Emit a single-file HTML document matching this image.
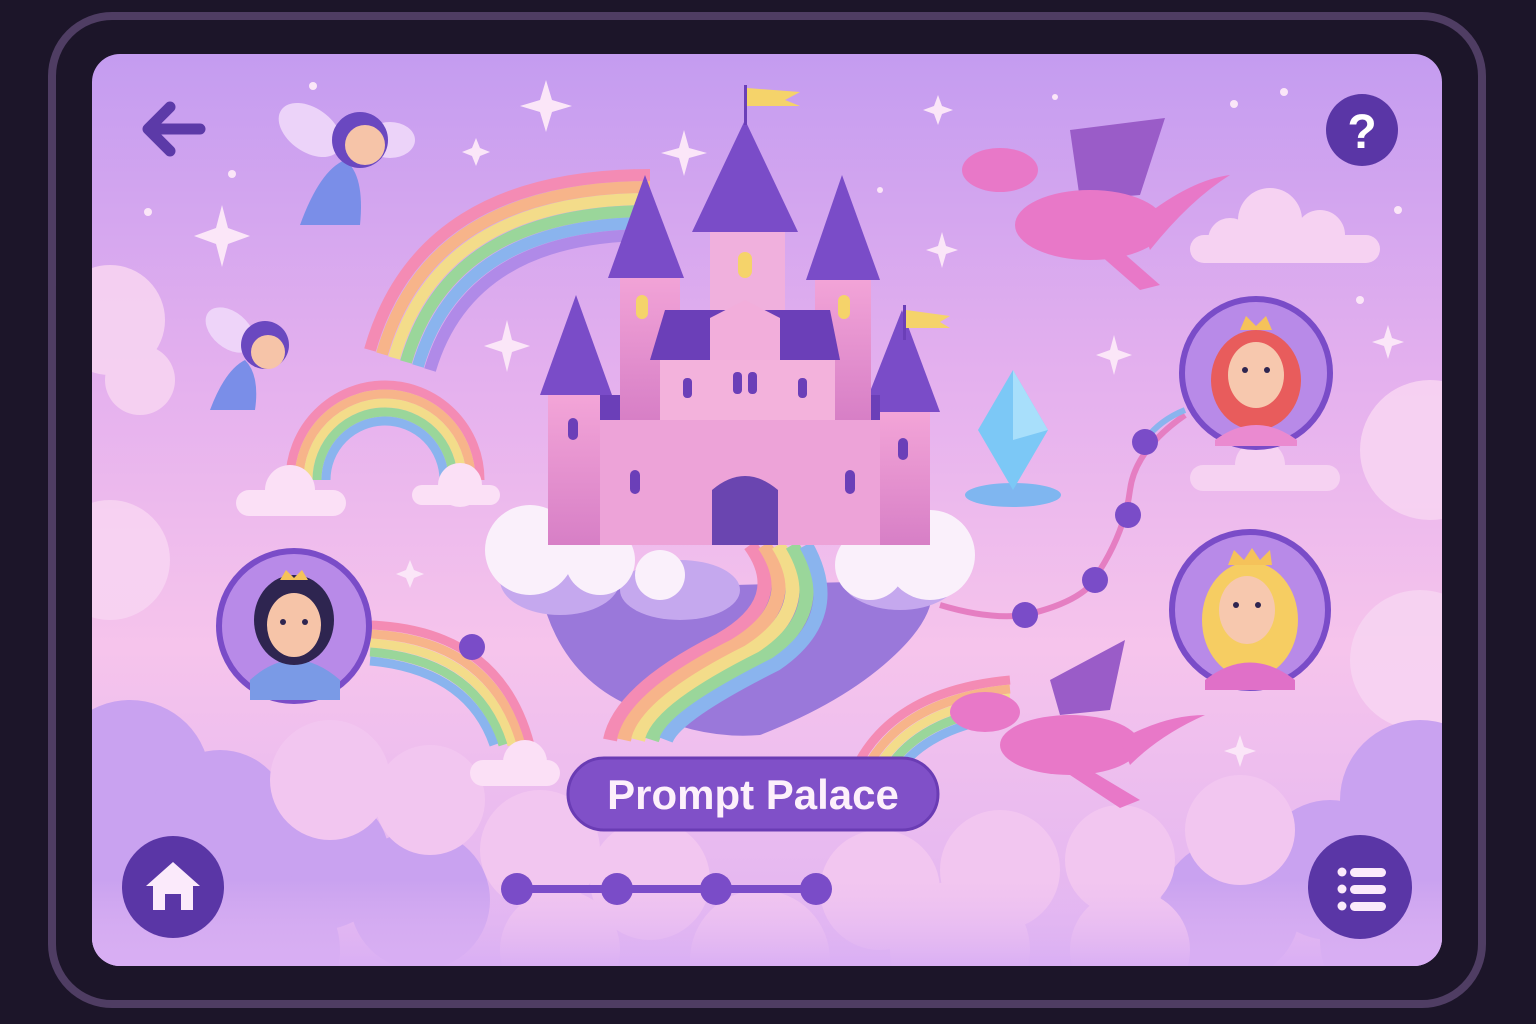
<!DOCTYPE html>
<html><head><meta charset="utf-8"><style>
html,body{margin:0;padding:0;background:#1c1529;width:1536px;height:1024px;overflow:hidden}
svg{display:block}
</style></head><body>
<svg width="1536" height="1024" viewBox="0 0 1536 1024" xmlns="http://www.w3.org/2000/svg">
<defs>
<linearGradient id="bg" x1="0" y1="0" x2="0" y2="1">
<stop offset="0" stop-color="#c49cf0"/><stop offset="0.35" stop-color="#e4b0ee"/><stop offset="0.65" stop-color="#f6c4ec"/><stop offset="1" stop-color="#e0b4f2"/>
</linearGradient>
<linearGradient id="bot" x1="0" y1="0" x2="0" y2="1"><stop offset="0" stop-color="#e8bcf2" stop-opacity="0"/><stop offset="1" stop-color="#d8aef4"/></linearGradient>
<clipPath id="scr"><rect x="92" y="54" width="1350" height="912" rx="28"/></clipPath>
<linearGradient id="tw" x1="0" y1="0" x2="0" y2="1"><stop offset="0" stop-color="#f3a5d8"/><stop offset="1" stop-color="#d77fc6"/></linearGradient>
</defs>
<rect x="52" y="16" width="1430" height="988" rx="60" fill="#1c1529" stroke="#4f3d63" stroke-width="8"/>
<g clip-path="url(#scr)">
<rect x="92" y="54" width="1350" height="912" fill="url(#bg)"/>
<g fill="#f7d4f2" opacity="0.9">
<circle cx="110" cy="320" r="55"/><circle cx="140" cy="380" r="35"/><circle cx="110" cy="560" r="60"/>
<circle cx="1430" cy="450" r="70"/><circle cx="1420" cy="660" r="70"/>
</g>
<g fill="#c9a2f0">
<circle cx="130" cy="780" r="80"/><circle cx="220" cy="820" r="70"/><circle cx="320" cy="860" r="70"/><circle cx="420" cy="900" r="70"/><circle cx="120" cy="920" r="90"/><circle cx="260" cy="950" r="80"/>
<circle cx="1420" cy="800" r="80"/><circle cx="1330" cy="870" r="70"/><circle cx="1230" cy="910" r="70"/><circle cx="1400" cy="940" r="80"/>
</g>
<g fill="#f2c6f0">
<circle cx="330" cy="780" r="60"/><circle cx="430" cy="800" r="55"/><circle cx="540" cy="850" r="60"/><circle cx="650" cy="880" r="60"/><circle cx="880" cy="890" r="60"/><circle cx="1000" cy="870" r="60"/><circle cx="1120" cy="860" r="55"/><circle cx="1240" cy="830" r="55"/>
<circle cx="560" cy="950" r="60"/><circle cx="760" cy="960" r="70"/><circle cx="960" cy="950" r="70"/><circle cx="1130" cy="950" r="60"/>
</g>
<rect x="92" y="880" width="1350" height="90" fill="url(#bot)"/>
<g fill="#f6d2f2"><circle cx="1270" cy="220" r="32"/><circle cx="1320" cy="235" r="25"/><circle cx="1230" cy="240" r="22"/><rect x="1190" y="235" width="190" height="28" rx="14"/></g>
<g fill="#f6d2f2"><circle cx="1260" cy="465" r="25"/><rect x="1190" y="465" width="150" height="26" rx="13"/></g>
<g fill="#fbe6f8">
<path d="M546 80 L552 100 L572 106 L552 112 L546 132 L540 112 L520 106 L540 100Z"/>
<path d="M222 205 L228 228 L250 236 L228 244 L222 267 L216 244 L194 236 L216 228Z"/>
<path d="M684 130 L689 148 L707 153 L689 158 L684 176 L679 158 L661 153 L679 148Z"/>
<path d="M938 95 L942 106 L953 110 L942 114 L938 125 L934 114 L923 110 L934 106Z"/>
<path d="M507 320 L512 340 L530 346 L512 352 L507 372 L502 352 L484 346 L502 340Z"/>
<path d="M1114 335 L1118 350 L1132 355 L1118 360 L1114 375 L1110 360 L1096 355 L1110 350Z"/>
<path d="M1388 325 L1392 338 L1404 342 L1392 346 L1388 359 L1384 346 L1372 342 L1384 338Z"/>
<path d="M942 232 L946 246 L958 250 L946 254 L942 268 L938 254 L926 250 L938 246Z"/>
<path d="M476 138 L480 148 L490 152 L480 156 L476 166 L472 156 L462 152 L472 148Z"/>
<path d="M410 560 L414 570 L424 574 L414 578 L410 588 L406 578 L396 574 L406 570Z"/>
<path d="M1240 735 L1244 747 L1256 751 L1244 755 L1240 767 L1236 755 L1224 751 L1236 747Z"/>
<circle cx="313" cy="86" r="4"/><circle cx="232" cy="174" r="4"/><circle cx="148" cy="212" r="4"/><circle cx="1234" cy="104" r="4"/><circle cx="1284" cy="92" r="4"/><circle cx="1360" cy="300" r="4"/><circle cx="1398" cy="210" r="4"/><circle cx="880" cy="190" r="3"/><circle cx="1055" cy="97" r="3"/>
</g>
<!-- big rainbow -->
<g fill="none" stroke-width="12">
<path d="M370 350 Q420 175 650 175" stroke="#f48bb4"/>
<path d="M382 354 Q430 187 650 187" stroke="#f7b48a"/>
<path d="M394 358 Q440 199 650 199" stroke="#f3dc8a"/>
<path d="M406 362 Q450 211 650 211" stroke="#9ad69a"/>
<path d="M418 366 Q460 223 650 223" stroke="#8ab4ee"/>
<path d="M430 370 Q470 235 650 235" stroke="#b08ae8"/>
</g>
<g fill="none" stroke-width="9">
<path d="M290 480 A95 95 0 0 1 480 480" stroke="#f48bb4"/>
<path d="M299 480 A86 86 0 0 1 471 480" stroke="#f7b48a"/>
<path d="M308 480 A77 77 0 0 1 462 480" stroke="#f3dc8a"/>
<path d="M317 480 A68 68 0 0 1 453 480" stroke="#9ad69a"/>
<path d="M326 480 A59 59 0 0 1 444 480" stroke="#8ab4ee"/>
</g>
<g fill="#fbe0f6"><circle cx="290" cy="490" r="25"/><rect x="236" y="490" width="110" height="26" rx="13"/><circle cx="460" cy="485" r="22"/><rect x="412" y="485" width="88" height="20" rx="10"/></g>
<g fill="none" stroke-width="9">
<path d="M370 625 Q500 630 530 745" stroke="#f48bb4"/>
<path d="M370 634 Q492 640 521 745" stroke="#f7b48a"/>
<path d="M370 643 Q484 650 512 745" stroke="#f3dc8a"/>
<path d="M370 652 Q476 660 503 745" stroke="#9ad69a"/>
<path d="M370 661 Q468 670 494 745" stroke="#8ab4ee"/>
</g>
<g fill="#fbe0f6"><circle cx="525" cy="762" r="22"/><rect x="470" y="760" width="90" height="26" rx="13"/></g>
<g fill="none" stroke-width="9">
<path d="M860 760 Q900 690 1010 680" stroke="#f48bb4"/>
<path d="M870 762 Q908 699 1010 689" stroke="#f7b48a"/>
<path d="M880 764 Q916 708 1010 698" stroke="#f3dc8a"/>
<path d="M890 766 Q924 717 1010 707" stroke="#9ad69a"/>
<path d="M900 768 Q932 726 1010 716" stroke="#8ab4ee"/>
</g>
<path d="M540 590 Q560 680 640 710 Q700 740 760 735 Q850 700 900 650 Q940 610 930 580Z" fill="#9a78da"/>
<g fill="none" stroke-width="14">
<path d="M750 545 Q790 600 720 640 Q620 690 610 740" stroke="#f48bb4"/>
<path d="M764 545 Q804 604 734 646 Q634 696 624 740" stroke="#f7b48a"/>
<path d="M778 545 Q818 608 748 652 Q648 702 638 740" stroke="#f3dc8a"/>
<path d="M792 545 Q832 612 762 658 Q662 708 652 740" stroke="#9ad69a"/>
<path d="M806 545 Q846 616 776 664 Q676 714 666 740" stroke="#8ab4ee"/>
</g>
<g fill="#c5a8ee"><ellipse cx="560" cy="580" rx="60" ry="35"/><ellipse cx="900" cy="575" rx="60" ry="35"/><ellipse cx="680" cy="590" rx="60" ry="30"/></g>
<g fill="#faf0fb"><circle cx="530" cy="550" r="45"/><circle cx="600" cy="560" r="35"/><circle cx="930" cy="555" r="45"/><circle cx="870" cy="565" r="35"/><circle cx="660" cy="575" r="25"/></g>
<g>
<rect x="548" y="395" width="56" height="150" fill="url(#tw)"/>
<polygon points="576,295 540,395 612,395" fill="#7a4cc8"/>
<rect x="870" y="410" width="60" height="135" fill="url(#tw)"/>
<polygon points="902,310 862,412 940,412" fill="#7a4cc8"/>
<rect x="600" y="415" width="280" height="130" fill="#eda3d8"/>
<rect x="600" y="395" width="280" height="25" fill="#6b3fb8"/>
<rect x="620" y="270" width="60" height="150" fill="url(#tw)"/>
<polygon points="645,175 608,278 684,278" fill="#7a4cc8"/>
<rect x="815" y="275" width="56" height="145" fill="url(#tw)"/>
<polygon points="842,175 806,280 880,280" fill="#7a4cc8"/>
<rect x="710" y="225" width="75" height="90" fill="#f0b0dd"/>
<polygon points="745,120 692,232 798,232" fill="#7a4cc8"/>
<rect x="744" y="85" width="3" height="40" fill="#6b3fb8"/>
<path d="M747 88 L800 92 L785 100 L800 106 L747 106Z" fill="#f5d36a"/>
<rect x="903" y="305" width="3" height="35" fill="#6b3fb8"/>
<path d="M906 310 L950 316 L940 322 L950 328 L906 328Z" fill="#f5d36a"/>
<rect x="660" y="355" width="175" height="65" fill="#f3b2dc"/>
<polygon points="665,310 830,310 840,360 650,360" fill="#6b3fb8"/>
<polygon points="710,318 745,300 780,318 780,360 710,360" fill="#f2aedb"/>
<path d="M712 545 L712 490 Q745 462 778 490 L778 545Z" fill="#6a45b0"/>
<g fill="#6b3fb8">
<rect x="630" y="470" width="10" height="24" rx="5"/><rect x="845" y="470" width="10" height="24" rx="5"/>
<rect x="568" y="418" width="10" height="22" rx="5"/><rect x="898" y="438" width="10" height="22" rx="5"/>
<rect x="733" y="372" width="9" height="22" rx="4"/><rect x="748" y="372" width="9" height="22" rx="4"/>
<rect x="683" y="378" width="9" height="20" rx="4"/><rect x="798" y="378" width="9" height="20" rx="4"/>
</g>
<g fill="#f5d36a"><rect x="636" y="295" width="12" height="24" rx="6"/><rect x="838" y="295" width="12" height="24" rx="6"/><rect x="738" y="252" width="14" height="26" rx="7"/></g>
</g>
<ellipse cx="1013" cy="495" rx="48" ry="12" fill="#7fb6f0"/>
<polygon points="1013,370 1048,430 1013,490 978,430" fill="#7cc8f6"/>
<polygon points="1013,370 1048,430 1013,440" fill="#a8dffb"/>
<path d="M940 605 Q990 620 1025 615 Q1090 600 1100 570 Q1125 530 1130 490 Q1135 450 1185 415" fill="none" stroke="#e57ec2" stroke-width="6"/>
<path d="M1145 440 Q1160 420 1185 410" fill="none" stroke="#8ab4ee" stroke-width="6"/>
<g fill="#7a4cc8"><circle cx="1025" cy="615" r="13"/><circle cx="1095" cy="580" r="13"/><circle cx="1128" cy="515" r="13"/><circle cx="1145" cy="442" r="13"/><circle cx="472" cy="647" r="13"/></g>
<g>
<circle cx="294" cy="626" r="75" fill="#b88ae8" stroke="#7a4cc8" stroke-width="6"/>
<path d="M250 680 Q294 640 340 680 L340 700 L250 700Z" fill="#7a9ae6"/>
<ellipse cx="294" cy="620" rx="40" ry="45" fill="#2e2550"/>
<ellipse cx="294" cy="625" rx="27" ry="32" fill="#f6c4a8"/>
<path d="M280 580 L286 570 L294 578 L302 570 L308 580Z" fill="#f5c25a"/>
<circle cx="1256" cy="373" r="74" fill="#b88ae8" stroke="#7a4cc8" stroke-width="6"/>
<ellipse cx="1256" cy="380" rx="45" ry="50" fill="#e85c5c"/>
<path d="M1215 440 Q1256 410 1297 440 L1297 446 L1215 446Z" fill="#ea8ad0"/>
<ellipse cx="1256" cy="375" rx="28" ry="33" fill="#f7c8ae"/>
<path d="M1240 330 L1246 316 L1256 326 L1266 316 L1272 330Z" fill="#f5c25a"/>
<circle cx="1250" cy="610" r="78" fill="#b88ae8" stroke="#7a4cc8" stroke-width="6"/>
<ellipse cx="1250" cy="620" rx="48" ry="58" fill="#f6cd62"/>
<path d="M1205 680 Q1250 645 1295 680 L1295 690 L1205 690Z" fill="#e070c8"/>
<ellipse cx="1247" cy="610" rx="28" ry="34" fill="#f7c8ae"/>
<path d="M1228 565 L1234 550 L1244 560 L1252 548 L1260 560 L1270 550 L1272 565Z" fill="#f5c25a"/>
<g fill="#2e2550"><circle cx="283" cy="622" r="3"/><circle cx="305" cy="622" r="3"/><circle cx="1245" cy="370" r="3"/><circle cx="1267" cy="370" r="3"/><circle cx="1236" cy="605" r="3"/><circle cx="1258" cy="605" r="3"/></g>
</g>
<g>
<ellipse cx="310" cy="130" rx="35" ry="22" fill="#efd8fa" opacity="0.9" transform="rotate(35 310 130)"/>
<ellipse cx="390" cy="140" rx="25" ry="18" fill="#efd8fa" opacity="0.9"/>
<path d="M300 225 Q320 170 345 160 Q365 175 360 225Z" fill="#7a8ee8"/>
<circle cx="360" cy="140" r="28" fill="#6a48c0"/>
<circle cx="365" cy="145" r="20" fill="#f6c4a8"/>
<ellipse cx="230" cy="330" rx="28" ry="18" fill="#efd8fa" opacity="0.9" transform="rotate(40 230 330)"/>
<path d="M210 410 Q225 370 245 360 Q260 375 255 410Z" fill="#7a8ee8"/>
<circle cx="265" cy="345" r="24" fill="#6a48c0"/>
<circle cx="268" cy="352" r="17" fill="#f6c4a8"/>
</g>
<g fill="#e878c8">
<path d="M1070 130 L1165 118 L1140 195 L1080 200Z" fill="#9a5cc8"/>
<ellipse cx="1090" cy="225" rx="75" ry="35"/>
<ellipse cx="1000" cy="170" rx="38" ry="22"/>
<path d="M1140 220 Q1190 180 1230 175 Q1190 200 1150 250Z"/>
<path d="M1120 250 L1160 285 L1140 290 L1100 255Z"/>
<path d="M1050 680 L1125 640 L1110 710 L1060 715Z" fill="#9a5cc8"/>
<ellipse cx="1070" cy="745" rx="70" ry="30"/>
<ellipse cx="985" cy="712" rx="35" ry="20"/>
<path d="M1120 740 Q1165 715 1205 715 Q1160 735 1130 765Z"/>
<path d="M1090 770 L1140 800 L1120 808 L1070 775Z"/>
</g>
</g>
<path d="M200 129 H150 M170 107 L148 129 L170 151" fill="none" stroke="#5c3aa8" stroke-width="11" stroke-linecap="round" stroke-linejoin="round"/>
<circle cx="1362" cy="130" r="36" fill="#5a36a6"/>
<text x="1362" y="148" text-anchor="middle" font-family="Liberation Sans, sans-serif" font-weight="bold" font-size="48" fill="#fff">?</text>
<circle cx="173" cy="887" r="51" fill="#5a36a6"/>
<path d="M173 862 L200 886 L193 886 L193 910 L181 910 L181 894 L165 894 L165 910 L153 910 L153 886 L146 886Z" fill="#fbeafb"/>
<circle cx="1360" cy="887" r="52" fill="#5a36a6"/>
<g fill="#fbeafb"><circle cx="1342" cy="872" r="4.5"/><circle cx="1342" cy="889" r="4.5"/><circle cx="1342" cy="906" r="4.5"/>
<rect x="1350" y="868" width="36" height="9" rx="4.5"/><rect x="1350" y="885" width="36" height="9" rx="4.5"/><rect x="1350" y="902" width="36" height="9" rx="4.5"/></g>
<rect x="568" y="758" width="370" height="72" rx="36" fill="#8050c8" stroke="#6a3cb4" stroke-width="3"/>
<text x="753" y="809" text-anchor="middle" font-family="Liberation Sans, sans-serif" font-weight="bold" font-size="42" fill="#fdf0fb">Prompt Palace</text>
<rect x="517" y="885" width="300" height="8" fill="#7a4cc8"/>
<g fill="#7a4cc8"><circle cx="517" cy="889" r="16"/><circle cx="617" cy="889" r="16"/><circle cx="716" cy="889" r="16"/><circle cx="816" cy="889" r="16"/></g>
</svg>
</body></html>
